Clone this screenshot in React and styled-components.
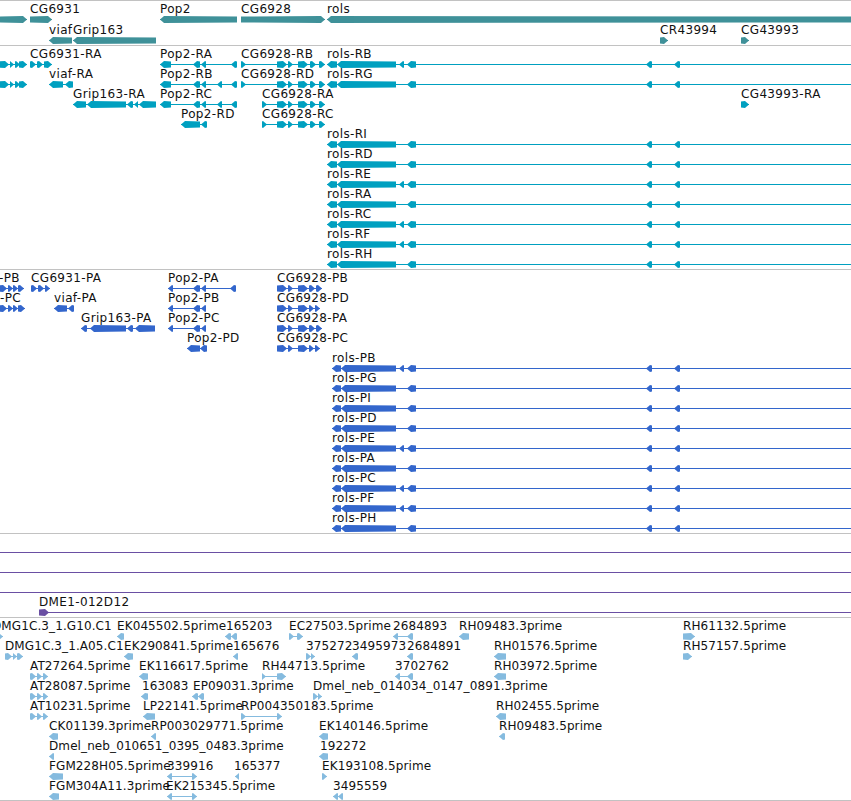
import React from 'react';
import styled, { createGlobalStyle } from 'styled-components';

const GlobalStyle = createGlobalStyle`
  html, body {
    margin: 0;
    padding: 0;
    background: white;
    overflow: hidden;
  }
`;

const Browser = styled.div`
  width: 851px;
  height: 801px;
  overflow: hidden;
  background: white;
  font-family: "DejaVu Sans", sans-serif;
  font-size: 12px;
  color: #111;
`;

const Track = styled.section`
  border-top: 1px solid #c2c2c2;
  padding-bottom: ${props => props.$pad}px;
  letter-spacing: ${props => props.$spacing}px;
`;

const Lane = styled.div`
  height: ${props => props.$h}px;
  display: flex;
  flex-direction: column;
  justify-content: flex-start;
`;

const LabelRow = styled.div`
  position: relative;
  height: 15px;
  flex: none;
`;

const FeatureLabel = styled.span`
  position: absolute;
  top: 1px;
  line-height: 15px;
  white-space: nowrap;
`;

const GlyphStrip = styled.svg`
  display: block;
  flex: none;
  width: 851px;
  height: 7px;
  color: ${props => props.$color};
`;

// одна экзонная стрелка: x1..x2, остриё по направлению dir
const arrow = (x1, x2, dir) => {
  const tip = Math.min(4, x2 - x1);
  if (dir === 'L') {
    return `${x1},3.5 ${x1 + tip},0 ${x2},0.5 ${x2},6.5 ${x1 + tip},7`;
  }
  return `${x2},3.5 ${x2 - tip},0 ${x1},0.5 ${x1},6.5 ${x2 - tip},7`;
};

const Glyph = ({ dir, blocks, end }) => {
  const from = blocks[0][0];
  const to = end ?? blocks[blocks.length - 1][1];
  return (
    <g>
      <rect x={from} y={3} width={to - from} height={1} fill="currentColor" />
      {blocks.map(b => (
        <polygon key={b[0]} points={arrow(b[0], b[1], b[2] || dir)} fill="currentColor" />
      ))}
    </g>
  );
};

const f = (x, label, dir, blocks, end) => ({ x, label, dir, blocks, end });

const CG_R = [[277, 287], [288, 293], [298, 308], [310, 316], [319, 325]];
const CG_P = [[277, 287], [288, 293], [298, 308], [309, 315], [316, 322]];
const CG_P2 = [[277, 287], [288, 293], [298, 308], [309, 314], [315, 320]];
const EST3 = [[30, 36], [37, 42], [43, 48]];

const rolsR = two => [
  [327, 337], [337, 396],
  ...(two ? [[399, 404]] : []),
  [407, 416], [646, 652], [674, 680],
];
const rolsP = two => [
  [332, 341], [341, 396],
  ...(two ? [[399, 404]] : []),
  [407, 416], [646, 652], [674, 680],
];

const tracks = [
  {
    color: '#3f9199', h: 21, pad: 2, spacing: 0.35,
    lanes: [
      [
        f(-40, '', 'R', [[-5, 27]]),
        f(30, 'CG6931', 'R', [[30, 52]]),
        f(160, 'Pop2', 'L', [[160, 237]]),
        f(241, 'CG6928', 'R', [[241, 325]]),
        f(327, 'rols', 'L', [[327, 860]]),
      ],
      [
        f(49, 'viaf', 'L', [[49, 72]]),
        f(73, 'Grip163', 'L', [[73, 156]]),
        f(660, 'CR43994', 'R', [[660, 668]]),
        f(741, 'CG43993', 'R', [[741, 749]]),
      ],
    ],
  },
  {
    color: '#00a0c0', h: 20, pad: 3, spacing: 0.35,
    lanes: [
      [
        f(-22, '-RB', 'R', [[-3, 9], [10, 14], [15, 20], [19, 27]]),
        f(30, 'CG6931-RA', 'R', [[30, 36], [37, 43], [44, 52]]),
        f(160, 'Pop2-RA', 'L', [[160, 171], [193, 200], [201, 206], [231, 237]]),
        f(241, 'CG6928-RB', 'R', [[241, 246], ...CG_R]),
        f(327, 'rols-RB', 'L', rolsR(true), 851),
      ],
      [
        f(-22, '-RC', 'R', [[-3, 9], [10, 14], [15, 20], [19, 27]]),
        f(49, 'viaf-RA', 'L', [[49, 63], [65, 73]]),
        f(160, 'Pop2-RB', 'L', [[160, 171], [193, 200], [201, 206], [217, 222], [231, 237]]),
        f(241, 'CG6928-RD', 'R', [[241, 246], ...CG_R]),
        f(327, 'rols-RG', 'L', rolsR(false), 851),
      ],
      [
        f(73, 'Grip163-RA', 'L', [[73, 86], [87, 126], [127, 133], [134, 138], [139, 156]]),
        f(160, 'Pop2-RC', 'L', [[160, 171], [193, 200], [201, 206], [217, 222], [231, 237]]),
        f(262, 'CG6928-RA', 'R', [[262, 267], ...CG_R]),
        f(741, 'CG43993-RA', 'R', [[741, 749]]),
      ],
      [
        f(181, 'Pop2-RD', 'L', [[181, 200], [201, 207]]),
        f(262, 'CG6928-RC', 'R', [[262, 267], ...CG_R]),
      ],
      [f(327, 'rols-RI', 'L', rolsR(false), 851)],
      [f(327, 'rols-RD', 'L', rolsR(false), 851)],
      [f(327, 'rols-RE', 'L', rolsR(true), 851)],
      [f(327, 'rols-RA', 'L', rolsR(false), 851)],
      [f(327, 'rols-RC', 'L', rolsR(true), 851)],
      [f(327, 'rols-RF', 'L', rolsR(true), 851)],
      [f(327, 'rols-RH', 'L', rolsR(false), 851)],
    ],
  },
  {
    color: '#3366cc', h: 20, pad: 3, spacing: 0.35,
    lanes: [
      [
        f(-1, '-PB', 'R', [[-3, 7], [8, 13], [13, 18], [18, 24]]),
        f(31, 'CG6931-PA', 'R', [[31, 37], [38, 44], [45, 50]]),
        f(168, 'Pop2-PA', 'L', [[168, 173], [193, 200], [201, 206], [230, 236]]),
        f(277, 'CG6928-PB', 'R', CG_P),
      ],
      [
        f(0, '-PC', 'R', [[-3, 7], [8, 13], [13, 18], [18, 25]]),
        f(54, 'viaf-PA', 'L', [[54, 67], [68, 74]]),
        f(168, 'Pop2-PB', 'L', [[168, 173], [193, 200], [201, 206]]),
        f(277, 'CG6928-PD', 'R', CG_P2),
      ],
      [
        f(81, 'Grip163-PA', 'L', [[81, 87], [90, 126], [127, 133], [135, 155]]),
        f(168, 'Pop2-PC', 'L', [[168, 173], [193, 200], [201, 206]]),
        f(277, 'CG6928-PA', 'R', CG_P),
      ],
      [
        f(187, 'Pop2-PD', 'L', [[187, 200], [200, 207]]),
        f(277, 'CG6928-PC', 'R', CG_P2),
      ],
      [f(332, 'rols-PB', 'L', rolsP(true), 851)],
      [f(332, 'rols-PG', 'L', rolsP(false), 851)],
      [f(332, 'rols-PI', 'L', rolsP(false), 851)],
      [f(332, 'rols-PD', 'L', rolsP(false), 851)],
      [f(332, 'rols-PE', 'L', rolsP(true), 851)],
      [f(332, 'rols-PA', 'L', rolsP(false), 851)],
      [f(332, 'rols-PC', 'L', rolsP(true), 851)],
      [f(332, 'rols-PF', 'L', rolsP(true), 851)],
      [f(332, 'rols-PH', 'L', rolsP(false), 851)],
    ],
  },
  {
    color: '#6a4fa3', h: 20, pad: 3, spacing: 0.35,
    lanes: [
      [f(0, '', 'R', [[-5, -1]], 851)],
      [f(0, '', 'R', [[-5, -1]], 851)],
      [f(0, '', 'R', [[-5, -1]], 851)],
      [f(39, 'DME1-012D12', 'R', [[39, 49]], 851)],
    ],
  },
  {
    color: '#85bbdf', h: 20, pad: 2, spacing: 0.1,
    lanes: [
      [
        f(-8, 'DMG1C.3_1.G10.C1', 'R', [[-6, 3]]),
        f(117, 'EK045502.5prime', 'L', [[117, 124]]),
        f(226, '165203', 'L', [[225, 231], [231, 237]]),
        f(289, 'EC27503.5prime', 'R', [[289, 294], [297, 303]]),
        f(393, '2684893', 'L', [[393, 398], [407, 413]]),
        f(459, 'RH09483.3prime', 'L', [[459, 469]]),
        f(683, 'RH61132.5prime', 'R', [[683, 695]]),
      ],
      [
        f(5, 'DMG1C.3_1.A05.C1', 'R', [[5, 12], [13, 17], [17, 23]]),
        f(124, 'EK290841.5prime', 'L', [[124, 133]]),
        f(233, '165676', 'L', [[233, 238]]),
        f(306, '375272', 'R', [[306, 311], [311, 315]]),
        f(352, '3495973', 'L', [[352, 358]]),
        f(407, '2684891', 'L', [[407, 413]]),
        f(494, 'RH01576.5prime', 'L', [[494, 506]]),
        f(683, 'RH57157.5prime', 'R', [[683, 692]]),
      ],
      [
        f(30, 'AT27264.5prime', 'R', EST3),
        f(139, 'EK116617.5prime', 'L', [[139, 148]]),
        f(262, 'RH44713.5prime', 'R', [[262, 266], [277, 286]]),
        f(395, '3702762', 'L', [[395, 400], [407, 413]]),
        f(494, 'RH03972.5prime', 'L', [[494, 506]]),
      ],
      [
        f(30, 'AT28087.5prime', 'R', EST3),
        f(142, '163083', 'L', [[141, 148]]),
        f(193, 'EP09031.3prime', 'L', [[192, 198], [198, 204]]),
        f(313, 'Dmel_neb_014034_0147_0891.3prime', 'R', [[313, 318], [318, 322]]),
      ],
      [
        f(30, 'AT10231.5prime', 'R', EST3),
        f(143, 'LP22141.5prime', 'L', [[143, 155]]),
        f(241, 'RP004350183.5prime', 'R', [[241, 246], [277, 282]]),
        f(496, 'RH02455.5prime', 'L', [[496, 506]]),
      ],
      [
        f(49, 'CK01139.3prime', 'L', [[49, 58]]),
        f(151, 'RP003029771.5prime', 'L', [[151, 156]]),
        f(319, 'EK140146.5prime', 'L', [[319, 328]]),
        f(499, 'RH09483.5prime', 'L', [[499, 505]]),
      ],
      [
        f(49, 'Dmel_neb_010651_0395_0483.3prime', 'L', [[49, 54]]),
        f(320, '192272', 'L', [[319, 328]]),
      ],
      [
        f(49, 'FGM228H05.5prime', 'L', [[49, 63]]),
        f(167, '339916', 'L', [[167, 172], [192, 197, 'R']]),
        f(234, '165377', 'L', [[235, 239]]),
        f(322, 'EK193108.5prime', 'R', [[322, 327]]),
      ],
      [
        f(49, 'FGM304A11.3prime', 'L', [[49, 59]]),
        f(166, 'EK215345.5prime', 'L', [[167, 172], [192, 197, 'R']]),
        f(333, '3495559', 'L', [[333, 338], [338, 343]]),
      ],
    ],
  },
];

const App = () => (
  <Browser>
    <GlobalStyle />
    {tracks.map(track => (
      <Track key={track.color} $pad={track.pad} $spacing={track.spacing}>
        {track.lanes.map((lane, i) => (
          <Lane key={i} $h={track.h}>
            <LabelRow>
              {lane.filter(item => item.label).map(item => (
                <FeatureLabel key={item.label} style={{ left: item.x }}>
                  {item.label}
                </FeatureLabel>
              ))}
            </LabelRow>
            <GlyphStrip $color={track.color} viewBox="0 0 851 7">
              {lane.map(item => (
                <Glyph key={item.x + item.label} dir={item.dir} blocks={item.blocks} end={item.end} />
              ))}
            </GlyphStrip>
          </Lane>
        ))}
      </Track>
    ))}
    <Track $pad={0} $spacing={0} />
  </Browser>
);

export default App;
